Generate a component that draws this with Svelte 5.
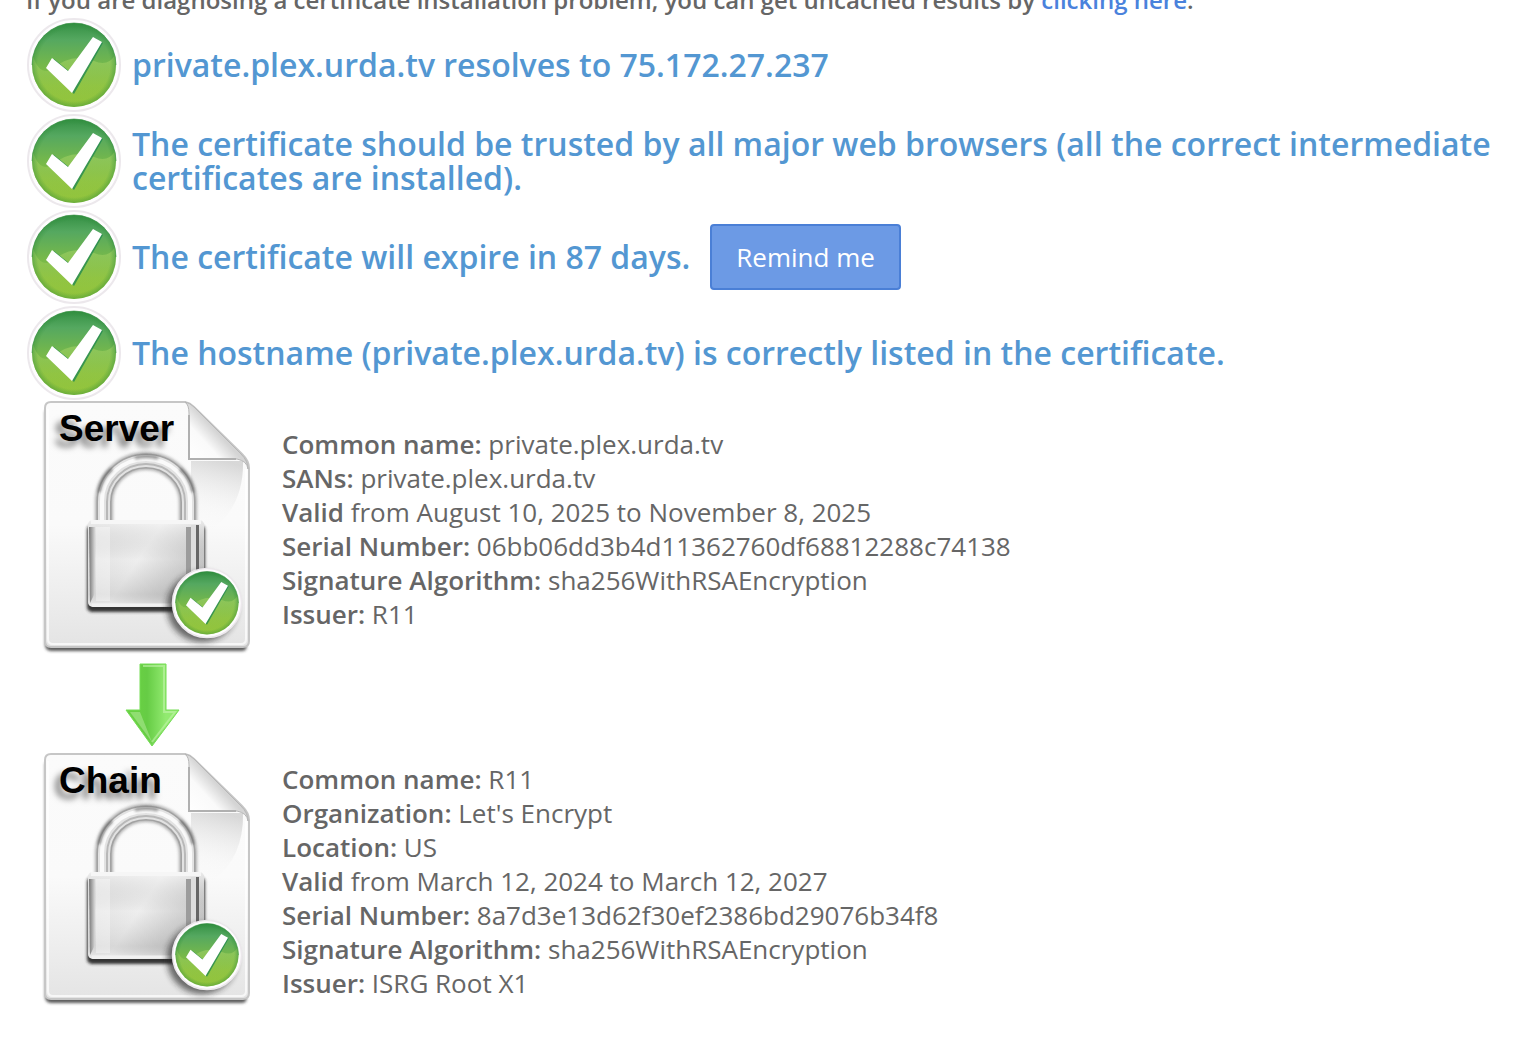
<script lang="ts">
  interface Field {
    label: string;
    value: string;
  }

  interface Certificate {
    kind: string;
    fields: Field[];
  }

  const checks = [
    { text: "private.plex.urda.tv resolves to 75.172.27.237" },
    {
      text: "The certificate should be trusted by all major web browsers (all the correct intermediate certificates are installed).",
    },
    { text: "The certificate will expire in 87 days.", reminder: true },
    { text: "The hostname (private.plex.urda.tv) is correctly listed in the certificate." },
  ];

  const certificates: Certificate[] = [
    {
      kind: "Server",
      fields: [
        { label: "Common name:", value: "private.plex.urda.tv" },
        { label: "SANs:", value: "private.plex.urda.tv" },
        { label: "Valid", value: "from August 10, 2025 to November 8, 2025" },
        { label: "Serial Number:", value: "06bb06dd3b4d11362760df68812288c74138" },
        { label: "Signature Algorithm:", value: "sha256WithRSAEncryption" },
        { label: "Issuer:", value: "R11" },
      ],
    },
    {
      kind: "Chain",
      fields: [
        { label: "Common name:", value: "R11" },
        { label: "Organization:", value: "Let's Encrypt" },
        { label: "Location:", value: "US" },
        { label: "Valid", value: "from March 12, 2024 to March 12, 2027" },
        { label: "Serial Number:", value: "8a7d3e13d62f30ef2386bd29076b34f8" },
        { label: "Signature Algorithm:", value: "sha256WithRSAEncryption" },
        { label: "Issuer:", value: "ISRG Root X1" },
      ],
    },
  ];
</script>

<!-- Shared gradients, referenced by id from every icon -->
<svg class="defs" aria-hidden="true">
  <defs>
    <linearGradient id="ball" x1="0" y1="0" x2="0" y2="1">
      <stop offset="0" stop-color="#349044" />
      <stop offset="0.2" stop-color="#55a860" />
      <stop offset="0.5" stop-color="#75b84b" />
      <stop offset="0.75" stop-color="#8cc13e" />
      <stop offset="1" stop-color="#94c53c" />
    </linearGradient>
    <radialGradient id="rim" cx="0.5" cy="0.5" r="0.5">
      <stop offset="0.86" stop-color="#2c8a37" stop-opacity="0" />
      <stop offset="1" stop-color="#2c8a37" stop-opacity="0.7" />
    </radialGradient>
    <linearGradient id="shine" x1="0" y1="0" x2="0" y2="1">
      <stop offset="0" stop-color="#b5dc70" stop-opacity="0.6" />
      <stop offset="1" stop-color="#9acb48" stop-opacity="0" />
    </linearGradient>
    <linearGradient id="paper" x1="0" y1="0" x2="0" y2="1">
      <stop offset="0" stop-color="#fbfbfb" />
      <stop offset="0.5" stop-color="#fafafa" />
      <stop offset="1" stop-color="#e4e4e4" />
    </linearGradient>
    <linearGradient id="fold" x1="0.06" y1="0.85" x2="0.49" y2="0.43">
      <stop offset="0" stop-color="#ffffff" />
      <stop offset="0.6" stop-color="#fafafa" />
      <stop offset="1" stop-color="#d4d4d4" />
    </linearGradient>
    <linearGradient id="foldShade" x1="0.6" y1="0" x2="0.4" y2="1">
      <stop offset="0" stop-color="#cfcfcf" stop-opacity="0.8" />
      <stop offset="0.7" stop-color="#efefef" stop-opacity="0.2" />
      <stop offset="1" stop-color="#f4f4f4" stop-opacity="0" />
    </linearGradient>
    <linearGradient id="metal" x1="0" y1="0.2" x2="1" y2="0.7">
      <stop offset="0" stop-color="#dedede" />
      <stop offset="0.45" stop-color="#eeeeee" />
      <stop offset="1" stop-color="#bdbdbd" />
    </linearGradient>
    <linearGradient id="metalLow" x1="0" y1="0" x2="0" y2="1">
      <stop offset="0" stop-color="#ffffff" stop-opacity="0.5" />
      <stop offset="0.45" stop-color="#a0a0a0" stop-opacity="0" />
      <stop offset="0.85" stop-color="#808080" stop-opacity="0.2" />
      <stop offset="1" stop-color="#ffffff" stop-opacity="0.4" />
    </linearGradient>
    <linearGradient id="edge" x1="0" y1="0" x2="1" y2="0">
      <stop offset="0" stop-color="#777777" />
      <stop offset="1" stop-color="#d8d8d8" />
    </linearGradient>
    <linearGradient id="arrow" x1="0" y1="0" x2="1" y2="0">
      <stop offset="0.2" stop-color="#69d043" />
      <stop offset="0.4" stop-color="#66cc45" />
      <stop offset="0.75" stop-color="#92ea70" />
    </linearGradient>
    <filter id="soft" x="-30%" y="-30%" width="160%" height="160%">
      <feGaussianBlur stdDeviation="3" />
    </filter>
    <filter id="softer" x="-30%" y="-30%" width="160%" height="160%">
      <feGaussianBlur stdDeviation="1.5" />
    </filter>
  </defs>
</svg>

{#snippet ball()}
  <circle cx="48" cy="48" r="46" fill="#fefdfe" stroke="#ece8ec" stroke-width="2" />
  <circle cx="48" cy="48" r="42" fill="url(#ball)" />
  <path d="M7 39 Q13 58 25 53 Q45 35 68 44 Q82 50 89 38 A42 42 0 0 1 48 90 A42 42 0 0 1 7 39Z" fill="url(#shine)" opacity="0.8" />
  <circle cx="48" cy="48" r="42" fill="url(#rim)" opacity="0.6" />
  <path d="M6 48 A42 42 0 0 1 90 48" fill="none" stroke="#2f8c3c" stroke-width="1" opacity="0.6" />
  <path d="M22 52 L28 42 L43 54 L69 21 L77 26 L48 77Z" fill="#238a50" opacity="0.8" />
  <path d="M20 51 L26 41 L42 54 L67 20 L76 25 L46 76Z" fill="#ffffff" />
{/snippet}

{#snippet document(kind: string)}
  <svg class="document" viewBox="0 0 256 256" role="img" aria-label="{kind} certificate">
    <path d="M25 10 H160 L220 66 V243 Q222 250 216 250 H25 Q19 250 19 243 V10Z" fill="#333333" opacity="0.8" filter="url(#softer)" />
    <path
      d="M25 1 H159 Q164 2 168 6 L216 53 Q223 60 223 67 V240 Q223 246 217 246 H25 Q19 246 19 240 V7 Q19 1 25 1Z"
      fill="url(#paper)"
      stroke="#c6c6c6"
      stroke-width="2"
    />
    <path d="M22 8 V238 Q22 243 27 243 H215 Q220 243 220 238 V68" fill="none" stroke="#ffffff" stroke-width="2" opacity="0.7" />
    <path d="M165 60 H217 Q218 104 187 128 Q176 130 165 126Z" fill="url(#foldShade)" />
    <path d="M159 1 Q163 4 163 12 V58 H211 Q221 60 222 68 Q222 60 215 53 L168 6 Q164 2 159 1Z" fill="url(#fold)" stroke="#b6b6b6" stroke-width="1" />
    <path d="M163 14 V58 H210" fill="none" stroke="#b0b0b0" stroke-width="2" />

    <path d="M78 122 V101 A42 41 0 0 1 162 101 V122" fill="none" stroke="#666666" stroke-width="18" opacity="0.5" filter="url(#softer)" />
    <path d="M78 122 V101 A42 41 0 0 1 162 101 V122" fill="none" stroke="#a2a2a2" stroke-width="15" />
    <path d="M78 122 V101 A42 41 0 0 1 162 101 V122" fill="none" stroke="#e2e2e2" stroke-width="12" />
    <path d="M76 122 V100 A44 42 0 0 1 164 100 V122" fill="none" stroke="#fafafa" stroke-width="4" />
    <path d="M81 122 V101 A39 38 0 0 1 159 101 V122" fill="none" stroke="#b8b8b8" stroke-width="2" />
    <path d="M73 91 Q76 76 86 68 M167 91 Q164 76 154 68 M109 57 Q120 54 132 57" fill="none" stroke="#606060" stroke-width="3" opacity="0.7" filter="url(#softer)" />

    <rect x="61" y="124" width="118" height="87" rx="5" fill="#222222" opacity="0.9" filter="url(#softer)" />
    <rect x="62" y="119" width="116" height="87" rx="5" fill="url(#metal)" />
    <rect x="62" y="119" width="116" height="87" rx="5" fill="url(#metalLow)" />
    <path d="M63 126 H69 V192 L64 202Z" fill="url(#edge)" />
    <rect x="70" y="126" width="14" height="74" fill="#ffffff" opacity="0.35" />
    <rect x="160" y="126" width="5" height="76" fill="#9c9c9c" />
    <rect x="165" y="124" width="5" height="78" fill="#dddddd" />
    <rect x="170" y="124" width="3" height="78" fill="#666666" />
    <path d="M65 121 H175" stroke="#f6f6f6" stroke-width="4" />
    <path d="M66 204 H174" stroke="#f1f1f1" stroke-width="3" />

    <text x="33" y="40" class="kind">{kind}</text>

    <circle cx="176" cy="206" r="35" fill="#222222" opacity="0.65" filter="url(#soft)" />
    <svg x="145" y="166" width="72" height="72" viewBox="0 0 96 96">
      {@render ball()}
    </svg>
  </svg>
{/snippet}

<main>
  <p class="intro">
    If you are diagnosing a certificate installation problem, you can get uncached results by <a href="#uncached">clicking here</a>.
  </p>

  <ul class="checks">
    {#each checks as check}
      <li>
        <svg class="tick" viewBox="0 0 96 96" aria-hidden="true">{@render ball()}</svg>
        <h3>{check.text}</h3>
        {#if check.reminder}
          <button type="button">Remind me</button>
        {/if}
      </li>
    {/each}
  </ul>

  {#each certificates as certificate, i}
    {#if i > 0}
      <svg class="arrow" viewBox="0 0 256 96" aria-hidden="true">
        <path d="M114 7 H140 V53 H153 L126 89 L100 53 H114Z" fill="url(#arrow)" stroke="#74dc54" stroke-width="1" />
        <path d="M117 9 H138 V55 H149 L126 85" fill="none" stroke="#c1f4aa" stroke-width="2" opacity="0.6" />
        <path d="M104 55 H114 L126 85Z" fill="#b7eca0" opacity="0.5" />
      </svg>
    {/if}
    <section class="certificate">
      {@render document(certificate.kind)}
      <div class="fields">
        {#each certificate.fields as field}
          <div><b>{field.label}</b> {field.value}</div>
        {/each}
      </div>
    </section>
  {/each}
</main>

<style>
  :global(body) {
    background: #ffffff;
    overflow: hidden;
  }

  .defs {
    position: absolute;
    width: 0;
    height: 0;
  }

  main {
    /* the view starts partway through the intro line */
    margin-top: -17px;
    padding: 0 20px 44px 26px;
    color: #666666;
    font-family: "Open Sans", "Noto Sans", sans-serif;
    font-size: 26px;
    line-height: 34px;
  }

  .intro {
    margin: 0;
    font-size: 24px;
    font-weight: 600;
  }

  a {
    color: #4a82dc;
    text-decoration: none;
  }

  .checks {
    margin: 0;
    padding: 0;
    list-style: none;
  }

  .checks li {
    display: flex;
    align-items: center;
    min-height: 96px;
  }

  .tick {
    flex: none;
    width: 96px;
    height: 96px;
    margin-right: 10px;
  }

  h3 {
    margin: 0;
    color: #5397d2;
    font-size: 32px;
    font-weight: 600;
    line-height: 34px;
  }

  button {
    margin-left: 20px;
    padding: 14px 24px;
    border: 2px solid #4a7fd6;
    border-radius: 4px;
    background: #6c9ae5;
    color: #ffffff;
    font: inherit;
  }

  .certificate {
    display: flex;
    align-items: center;
  }

  .document {
    flex: none;
    width: 256px;
    height: 256px;
  }

  .kind {
    font-family: "Liberation Sans", Arial, sans-serif;
    font-size: 37px;
    font-weight: 700;
    text-shadow: -5px 6px 6px rgba(0, 0, 0, 0.5);
  }

  .arrow {
    display: block;
    width: 256px;
    height: 96px;
  }

  .fields b {
    font-weight: 600;
  }
</style>
